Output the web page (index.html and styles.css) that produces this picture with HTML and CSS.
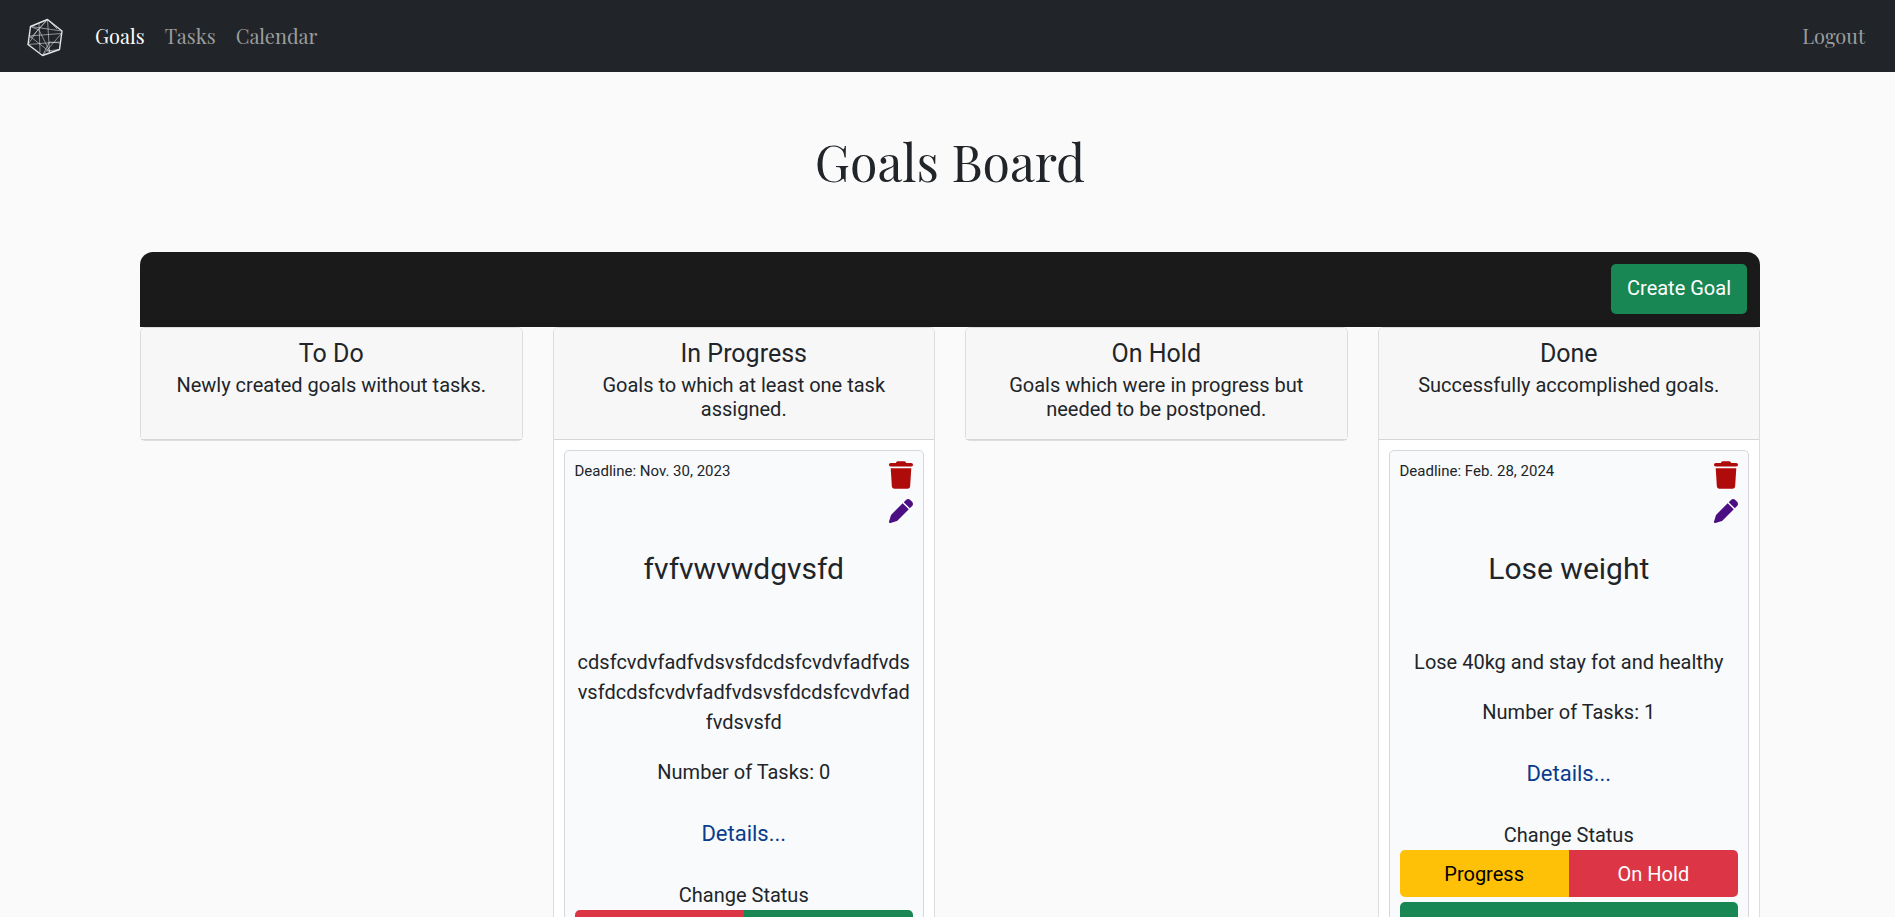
FILE: index.html
```
<!DOCTYPE html>
<html lang="en">
<head>
<meta charset="utf-8">
<title>Goals Board</title>
<link rel="stylesheet" href="styles.css">
</head>
<body>
<svg class="sprite" aria-hidden="true">
  <symbol id="trash" viewBox="0 0 448 512"><path d="M135.2 17.7C140.600 6.800 151.700 0 163.800 0H284.200c12.100 0 23.200 6.800 28.600 17.700L320 32h96c17.700 0 32 14.300 32 32s-14.300 32-32 32H32C14.300 96 0 81.700 0 64s14.300-32 32-32h96zM32 128H416L394.800 467c-1.600 25.300-22.600 45-47.900 45H101.100c-25.300 0-46.300-19.700-47.900-45z"/></symbol>
  <symbol id="pen" viewBox="0 0 512 512"><path d="M362.700 19.300L314.300 67.700 444.300 197.700l48.400-48.400c25-25 25-65.500 0-90.500L453.300 19.300c-25-25-65.500-25-90.500 0zM291.700 90.300L58.600 323.500c-10.400 10.400-18 23.300-22.200 37.400L1 481.200C-1.500 489.700.8 498.800 7 505s15.300 8.500 23.700 6.100l120.300-35.400c14.100-4.200 27-11.800 37.400-22.200L421.700 220.300z"/></symbol>
</svg>
<nav class="navbar">
  <a class="brand" href="#" aria-label="Home">
    <svg class="logo" viewBox="0 0 40 42" fill="none" stroke="#e4e5e5">
      <path stroke-width="1.400" stroke-linejoin="round" d="M22.500 4.500L37 16 34.500 34.500 17.500 40.500 3 29.500 5.500 11.500Z"/>
      <path stroke-width=".8" opacity=".7" d="M22.500 4.500L5.500 23M22.500 4.500L12 16 3 29.500 34.500 27M5.500 11.500L37 16M5.500 11.500L14 15 25 37M14 8.500L15 37M22.500 4.500L24.500 37M22.500 4.500L32 14M4.500 21L36 18.500M4.500 21L25 37M36 19L17.500 40.500M17.500 40.500L24.500 27 35.500 28M22 36L34.500 34.500"/>
    </svg>
  </a>
  <a class="nav-link active" href="#">Goals</a>
  <a class="nav-link" href="#">Tasks</a>
  <a class="nav-link" href="#">Calendar</a>
  <a class="nav-link logout" href="#">Logout</a>
</nav>
<main class="page">
  <h1 class="page-title">Goals Board</h1>
  <div class="toolbar"><button class="create" type="button">Create Goal</button></div>
  <div class="board">
    <section class="column">
      <header class="column-head"><h2>To Do</h2><p>Newly created goals without tasks.</p></header>
    </section>
    <section class="column">
      <header class="column-head"><h2>In Progress</h2><p>Goals to which at least one task assigned.</p></header>
      <div class="column-body">
        <article class="goal">
          <div class="goal-top">
            <span class="deadline">Deadline: Nov. 30, 2023</span>
            <div class="actions">
              <button class="icon-button delete" type="button" aria-label="Delete goal"><svg class="trash-icon"><use href="#trash"/></svg></button>
              <button class="icon-button edit" type="button" aria-label="Edit goal"><svg class="pen-icon"><use href="#pen"/></svg></button>
            </div>
          </div>
          <h3 class="goal-title">fvfvwvwdgvsfd</h3>
          <p class="text">cdsfcvdvfadfvdsvsfdcdsfcvdvfadfvdsvsfdcdsfcvdvfadfvdsvsfdcdsfcvdvfadfvdsvsfd</p>
          <p class="text">Number of Tasks: 0</p>
          <a class="details" href="#">Details...</a>
          <p class="status-label">Change Status</p>
          <div class="statuses">
            <button class="status hold" type="button" aria-label="On Hold"></button>
            <button class="status done" type="button" aria-label="Done"></button>
          </div>
        </article>
      </div>
    </section>
    <section class="column">
      <header class="column-head"><h2>On Hold</h2><p>Goals which were in progress but needed to be postponed.</p></header>
    </section>
    <section class="column">
      <header class="column-head"><h2>Done</h2><p>Successfully accomplished goals.</p></header>
      <div class="column-body">
        <article class="goal">
          <div class="goal-top">
            <span class="deadline">Deadline: Feb. 28, 2024</span>
            <div class="actions">
              <button class="icon-button delete" type="button" aria-label="Delete goal"><svg class="trash-icon"><use href="#trash"/></svg></button>
              <button class="icon-button edit" type="button" aria-label="Edit goal"><svg class="pen-icon"><use href="#pen"/></svg></button>
            </div>
          </div>
          <h3 class="goal-title">Lose weight</h3>
          <p class="text">Lose 40kg and stay fot and healthy</p>
          <p class="text">Number of Tasks: 1</p>
          <a class="details" href="#">Details...</a>
          <p class="status-label">Change Status</p>
          <div class="statuses">
            <button class="status progress" type="button">Progress</button>
            <button class="status hold" type="button">On Hold</button>
          </div>
          <div class="statuses">
            <button class="status done" type="button" aria-label="Done"></button>
          </div>
        </article>
      </div>
    </section>
  </div>
</main>
</body>
</html>
```
FILE: styles.css
```
* { box-sizing: border-box; }
html { scrollbar-width: none; }
body {
  margin: 0;
  background: #fafafa;
  color: #212529;
  font: 400 20px/30px Roboto, sans-serif;
}
h1, h2, h3, p { margin: 0; font-weight: 400; }
a { text-decoration: none; }
button { font: inherit; border: 0; padding: 0; cursor: pointer; }
.sprite { display: none; }

.navbar {
  display: flex;
  align-items: center;
  gap: 20px;
  height: 72px;
  padding: 0 30px 0 25px;
  background: #212529;
  font: 20px/30px "Playfair Display", "Liberation Serif", serif;
}
.brand { display: flex; margin-right: 10px; }
.logo { width: 40px; height: 42px; }
.nav-link { color: #9b9d9f; }
.nav-link.active { color: #fff; }
.logout { margin-left: auto; }

.page { padding: 60px 135px 0 140px; }
.page-title {
  margin-bottom: 60px;
  text-align: center;
  font: 400 50px/60px "Playfair Display", "Liberation Serif", serif;
}
.toolbar {
  display: flex;
  justify-content: flex-end;
  padding: 12px 13px 13px;
  background: #1a1a1a;
  border-radius: 13px 13px 0 0;
}
.create {
  height: 50px;
  padding: 0 16px 2px;
  border-radius: 5px;
  background: #198754;
  color: #fff;
}

.board {
  display: grid;
  grid-template-columns: repeat(4, minmax(0, 1fr));
  gap: 30px;
  align-items: start;
}
.column {
  border: 1px solid #dcdddd;
  border-radius: 5px;
  background: #fff;
  text-align: center;
}
.column-head {
  min-height: 112px;
  padding: 11px 20px 18px;
  border-bottom: 1px solid #d5d6d6;
  border-radius: 4px 4px 0 0;
  background: #f7f7f7;
}
.column-head h2 { margin-bottom: 4px; font-size: 25px; line-height: 30px; }
.column-head p { line-height: 24px; padding: 0 10px; }
.column-body { padding: 10px; }

.goal {
  padding: 10px;
  border: 1px solid #d6d7da;
  border-radius: 5px;
  background: #f8fafc;
}
.goal-top { display: flex; justify-content: space-between; margin-bottom: 28px; }
.deadline { font-size: 15px; line-height: 20px; }
.actions { display: flex; flex-direction: column; gap: 10px; }
.icon-button { display: flex; background: none; }
.icon-button svg { width: 24px; fill: currentColor; }
.delete { color: #b00b0b; }
.edit { color: #4b0f83; }
.trash-icon { height: 28px; }
.pen-icon { height: 24px; }
.goal-title { margin-bottom: 60px; font-size: 30px; line-height: 36px; }
.text { margin-bottom: 20px; overflow-wrap: anywhere; }
.details { display: block; margin: 30px 0; color: #0b3b8c; font-size: 22px; line-height: 33px; }
.status-label { line-height: 30px; }
.statuses { display: flex; margin-bottom: 5px; border-radius: 5px; overflow: hidden; }
.status { flex: 1; height: 47px; color: #fff; }
.hold { background: #dc3545; }
.done { background: #198754; }
.progress { background: #ffc107; color: #000; }
```
